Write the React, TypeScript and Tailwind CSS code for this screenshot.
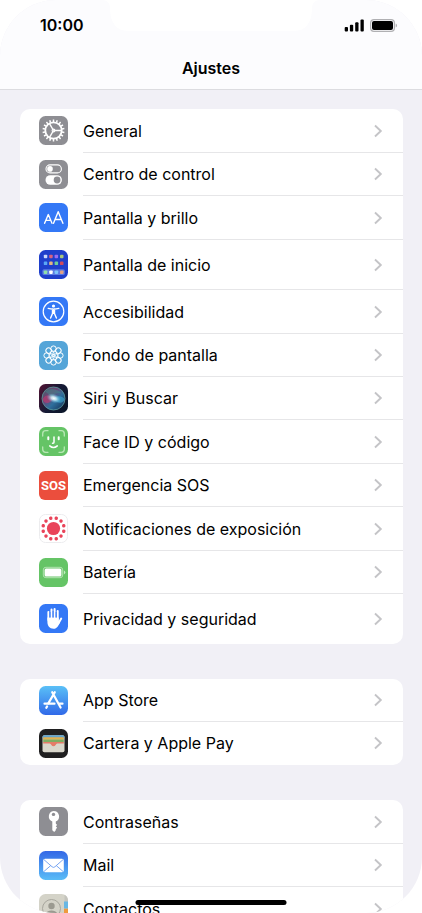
import type { ReactNode } from "react";

type Row = { label: string; icon: ReactNode; height: string };

const SHORT = "h-[43px]";
const REGULAR = "h-11";
const TALL = "h-[50px]";

function Tile({ fill, children }: { fill: string; children?: ReactNode }) {
  return (
    <svg viewBox="0 0 29 29" className="size-[29px] shrink-0" fill="none" aria-hidden="true">
      <rect width="29" height="29" rx="6.5" fill={fill} />
      {children}
    </svg>
  );
}

const around = (count: number) => Array.from({ length: count }, (_, i) => (i * 360) / count);

function GearIcon() {
  return (
    <Tile fill="#8e8e93">
      <g stroke="#fff">
        <circle cx="14.5" cy="14.5" r="8.2" strokeWidth="1.8" />
        {around(18).map((a) => (
          <path key={a} d="M14.5 5.9V3.5" strokeWidth="1.5" transform={`rotate(${a} 14.5 14.5)`} />
        ))}
        {[90, 210, 330].map((a) => (
          <path key={a} d="M14.5 14.5V6.5" strokeWidth="1.4" transform={`rotate(${a} 14.5 14.5)`} />
        ))}
        <circle cx="14.5" cy="14.5" r="1.4" strokeWidth="1.1" />
      </g>
    </Tile>
  );
}

function ControlsIcon() {
  return (
    <Tile fill="#8e8e93">
      <rect x="7" y="4.9" width="15.4" height="8" rx="4" stroke="#fff" strokeWidth="1.1" />
      <circle cx="11" cy="8.9" r="2.8" fill="#fff" />
      <rect x="6.5" y="15.2" width="16.4" height="9.6" rx="4.8" fill="#fff" />
      <circle cx="18.1" cy="20" r="3.4" fill="#8e8e93" />
    </Tile>
  );
}

function DisplayIcon() {
  return (
    <Tile fill="#3478f6">
      <g stroke="#fff" strokeWidth="1.4" strokeLinecap="round" strokeLinejoin="round">
        <path d="M5.6 20.3 9.3 11.6 13 20.3M6.8 17.4h5" />
        <path d="M14.5 20.3 19.2 8.7 23.9 20.3M16 16.5h6.4" />
      </g>
    </Tile>
  );
}

const appDots = [
  ["#c9d8fb", "#d9627f", "#9b6cf0", "#a8c77c"],
  ["#5aa6f7", "#e3b482", "#6fcf9a", "#d1495b"],
  ["#8fe0a8", "#ffffff", "#7cc4fb", "#e2a183"],
];

function HomeScreenIcon() {
  return (
    <Tile fill="#1f3fcb">
      <rect x="3.4" y="19.2" width="22.4" height="5.8" rx="1.6" fill="#5b7be4" />
      {appDots.map((line, r) =>
        line.map((c, i) => (
          <rect key={`${r}${i}`} x={4.8 + i * 5.4} y={[4.7, 11.6, 20.4][r]} width="3.5" height="3.5" rx="0.9" fill={c} />
        )),
      )}
    </Tile>
  );
}

function AccessibilityIcon() {
  return (
    <Tile fill="#3478f6">
      <circle cx="14.5" cy="14.5" r="10.3" stroke="#fff" strokeWidth="1.2" />
      <circle cx="14.5" cy="9" r="1.6" fill="#fff" />
      <path
        d="M9.2 11.4c3.4 1 7.2 1 10.6 0M14.5 12.2v4M13.5 12v4.4l-1.9 4.7M15.5 12v4.4l1.9 4.7"
        stroke="#fff"
        strokeWidth="1.4"
        strokeLinecap="round"
        strokeLinejoin="round"
      />
    </Tile>
  );
}

function WallpaperIcon() {
  return (
    <Tile fill="#55a5d8">
      <g stroke="#fff">
        {around(8).map((a) => (
          <circle key={a} cx="14.5" cy="7.6" r="2.7" strokeWidth="1" transform={`rotate(${a} 14.5 14.5)`} />
        ))}
        {around(6).map((a) => (
          <circle key={a} cx="14.5" cy="11.9" r="1.9" strokeWidth="0.8" transform={`rotate(${a + 30} 14.5 14.5)`} />
        ))}
      </g>
    </Tile>
  );
}

function SiriIcon() {
  return (
    <Tile fill="url(#siriBase)">
      <defs>
        <linearGradient id="siriBase" x1="0" y1="0.2" x2="1" y2="0.8">
          <stop offset="0" stopColor="#4a1433" />
          <stop offset="0.5" stopColor="#151a35" />
          <stop offset="1" stopColor="#0b1729" />
        </linearGradient>
        <linearGradient id="siriOrb" x1="0" y1="0" x2="1" y2="1">
          <stop offset="0" stopColor="#3d5f66" />
          <stop offset="0.35" stopColor="#6d4576" />
          <stop offset="0.6" stopColor="#2f6f9d" />
          <stop offset="1" stopColor="#122c50" />
        </linearGradient>
        <radialGradient id="siriGlow">
          <stop offset="0" stopColor="#fff" />
          <stop offset="0.35" stopColor="#d3f0fa" stopOpacity="0.85" />
          <stop offset="1" stopColor="#5fb6dc" stopOpacity="0" />
        </radialGradient>
      </defs>
      <circle cx="14.5" cy="14.5" r="11.5" fill="url(#siriOrb)" stroke="#5d9a9c" strokeWidth="0.8" />
      <path d="M3.6 15c3-5 7-4 10.9-.4C11 20 5.500 21 3.600 15z" fill="#c5376e" opacity="0.6" />
      <path d="M6 7.5c5-4 12-3 17 2-6-1-10 1-9 5-3-3-5-5-8-7z" fill="#3e8c8c" opacity="0.5" />
      <path d="M14 15c4-4 9-3 11.5 0-1 5-7 5-11.5 0z" fill="#42b5dc" opacity="0.55" />
      <ellipse cx="14.8" cy="14.3" rx="7.5" ry="4.6" fill="url(#siriGlow)" transform="rotate(20 14.8 14.3)" />
    </Tile>
  );
}

function FaceIdIcon() {
  return (
    <Tile fill="#65c466">
      <path
        d="M3.700 9V6.700a3 3 0 0 1 3-3H9M20 3.700h2.300a3 3 0 0 1 3 3V9M25.300 20v2.300a3 3 0 0 1-3 3H20M9 25.300H6.700a3 3 0 0 1-3-3V20"
        stroke="#b9e7b6"
        strokeWidth="1.3"
        strokeLinecap="round"
      />
      <g stroke="#fff" strokeLinecap="round" strokeLinejoin="round">
        <path d="M9.3 10.3v2M19.7 10.3v2" strokeWidth="2" />
        <path d="M15 10v5.200q0 1-1 1h-.5M10.700 18.900q3.800 3.300 7.600 0" strokeWidth="1.5" />
      </g>
    </Tile>
  );
}

function SosIcon() {
  return (
    <span className="flex size-[29px] shrink-0 items-center justify-center rounded-md bg-[#eb4e3d] font-['Roboto',sans-serif] text-[13px] leading-none font-bold text-white">
      SOS
    </span>
  );
}

function ExposureIcon() {
  return (
    <svg viewBox="0 0 29 29" className="size-[29px] shrink-0" aria-hidden="true">
      <rect x="0.5" y="0.5" width="28" height="28" rx="6" fill="#fff" stroke="#ececee" />
      <circle cx="14.5" cy="14.5" r="6.6" fill="#e9445a" />
      {around(12).map((a) => (
        <circle key={a} cx="14.5" cy="3.9" r="1.75" fill="#e9445a" transform={`rotate(${a + 15} 14.5 14.5)`} />
      ))}
    </svg>
  );
}

function BatteryIcon() {
  return (
    <Tile fill="#65c466">
      <rect x="4.3" y="9.3" width="19.4" height="10.4" rx="2.6" stroke="#c5ebc4" strokeWidth="0.8" />
      <rect x="5.6" y="10.6" width="16.8" height="7.8" rx="1.5" fill="#fff" />
      <path d="M24.900 12.600v3.800q1.500-.6 1.500-1.900t-1.500-1.900z" fill="#c5ebc4" />
    </Tile>
  );
}

function HandIcon() {
  return (
    <Tile fill="#3478f6">
      <g stroke="#fff" strokeLinecap="round" strokeWidth="2">
        <path d="M9.4 8v8M12.5 5.6V15M15.6 5.1V15M18.7 7v9" />
        <path d="M22.2 14.600 19.400 19.600" />
      </g>
      <path d="M8.400 13.500h11.300v3l1.300 1.500c-1.500 3.500-2.800 6.800-6.500 6.800-4 0-6.100-2.900-6.100-7z" fill="#fff" />
      <path d="M10.950 8v5.500M14.050 7v6.500M17.150 8v5.500" stroke="#3478f6" strokeWidth="0.9" />
    </Tile>
  );
}

function AppStoreIcon() {
  return (
    <Tile fill="url(#storeBlue)">
      <defs>
        <linearGradient id="storeBlue" x1="0" y1="0" x2="0" y2="1">
          <stop offset="0" stopColor="#5ac0f7" />
          <stop offset="1" stopColor="#3169e8" />
        </linearGradient>
      </defs>
      <g stroke="#fff" strokeWidth="2.2" strokeLinecap="round">
        <path d="M13.200 6.200 21.600 21.500M15.800 6.200 9.300 17.400M8.100 20.400l-.8 1.400" />
        <path d="M5.500 17.700h10M20.500 17.700h3" />
      </g>
    </Tile>
  );
}

function WalletIcon() {
  return (
    <Tile fill="#1f1f20">
      <rect x="3.5" y="6.2" width="22" height="17" rx="1.8" fill="#d9d7cc" />
      <path d="M3.500 9.500V8a1.800 1.800 0 0 1 1.800-1.800h18.400A1.800 1.800 0 0 1 25.500 8v1.500z" fill="#63a5cd" />
      <path d="M4.200 8.200h20.600v2.600H4.200z" fill="#e3b04f" />
      <path d="M4.200 10.600h20.600v2.600H4.200z" fill="#7ead62" />
      <path d="M4.200 12.900h20.600v1.500h-6.600c-1.200 0-1.800 2.900-3.700 2.900s-2.500-2.900-3.700-2.900H4.200z" fill="#e47c68" />
    </Tile>
  );
}

function KeyIcon() {
  return (
    <Tile fill="#8e8e93">
      <path
        d="M14.500 3.900a5.600 5.600 0 0 1 2.300 10.700v2l1.300 1.300-1.300 1.400 1.300 1.500-1.300 1.500v.9l-1.600 1.900-1.900-1.900v-8.600A5.600 5.600 0 0 1 14.500 3.900z"
        fill="#fff"
      />
      <circle cx="14.5" cy="7.4" r="1.7" fill="#8e8e93" />
    </Tile>
  );
}

function MailIcon() {
  return (
    <Tile fill="url(#mailBlue)">
      <defs>
        <linearGradient id="mailBlue" x1="0" y1="0" x2="0" y2="1">
          <stop offset="0" stopColor="#3468e6" />
          <stop offset="1" stopColor="#5abcf7" />
        </linearGradient>
      </defs>
      <rect x="4.2" y="7.7" width="20.6" height="13.6" rx="1.8" fill="#fff" />
      <path d="m4.800 8.500 8.300 7.300q1.400 1.200 2.800 0l8.300-7.300M4.800 20.600l6.900-6M24.200 20.600l-6.900-6" stroke="#6a9cf0" strokeWidth="0.9" />
    </Tile>
  );
}

function ContactsIcon() {
  return (
    <Tile fill="#d4d3c8">
      <path d="M25.500 0.700v27.600A6.500 6.500 0 0 0 29 22.500v-16A6.500 6.500 0 0 0 25.500 0.700z" fill="#c4c4bd" />
      <path d="M25 7.500h4v7h-4z" fill="#68b7e4" />
      <path d="M25 14.800h4V23l-4 4z" fill="#ef9a3e" />
      <circle cx="12.5" cy="14.5" r="9" stroke="#a3a298" strokeWidth="0.9" />
      <circle cx="12.5" cy="12" r="3.2" fill="#9b9a90" />
      <path d="M6.300 20.700q1-4.300 6.200-4.300t6.200 4.300q-6.200 5-12.400 0z" fill="#9b9a90" />
    </Tile>
  );
}

const groups: Row[][] = [
  [
    { label: "General", icon: <GearIcon />, height: REGULAR },
    { label: "Centro de control", icon: <ControlsIcon />, height: SHORT },
    { label: "Pantalla y brillo", icon: <DisplayIcon />, height: REGULAR },
    { label: "Pantalla de inicio", icon: <HomeScreenIcon />, height: TALL },
    { label: "Accesibilidad", icon: <AccessibilityIcon />, height: REGULAR },
    { label: "Fondo de pantalla", icon: <WallpaperIcon />, height: SHORT },
    { label: "Siri y Buscar", icon: <SiriIcon />, height: SHORT },
    { label: "Face ID y código", icon: <FaceIdIcon />, height: REGULAR },
    { label: "Emergencia SOS", icon: <SosIcon />, height: SHORT },
    { label: "Notificaciones de exposición", icon: <ExposureIcon />, height: REGULAR },
    { label: "Batería", icon: <BatteryIcon />, height: SHORT },
    { label: "Privacidad y seguridad", icon: <HandIcon />, height: TALL },
  ],
  [
    { label: "App Store", icon: <AppStoreIcon />, height: SHORT },
    { label: "Cartera y Apple Pay", icon: <WalletIcon />, height: SHORT },
  ],
  [
    { label: "Contraseñas", icon: <KeyIcon />, height: REGULAR },
    { label: "Mail", icon: <MailIcon />, height: SHORT },
    { label: "Contactos", icon: <ContactsIcon />, height: REGULAR },
  ],
];

function SettingsGroup({ rows }: { rows: Row[] }) {
  return (
    <ul className="overflow-hidden rounded-[10px] bg-white">
      {rows.map((row, i) => (
        <li key={row.label} className={row.height}>
          <a href="#" className="flex h-full gap-[15px] pl-[19px]">
            <span className="flex items-center border-b border-transparent">{row.icon}</span>
            <span
              className={`flex flex-1 items-center justify-between border-b pr-5 ${
                i < rows.length - 1 ? "border-[#e6e6e8]" : "border-transparent"
              }`}
            >
              {row.label}
              <svg viewBox="0 0 9 14" className="h-3.5 w-[9px]" fill="none" aria-hidden="true">
                <path d="m1 1.500 5.800 5.500L1 12.500" stroke="#c4c4c7" strokeWidth="1.9" />
              </svg>
            </span>
          </a>
        </li>
      ))}
    </ul>
  );
}

function StatusBar() {
  return (
    <div className="flex h-12 items-center justify-between pt-0.5 pr-6 pl-10">
      <time className="font-semibold">10:00</time>
      <div className="flex items-center gap-1.5">
        <svg viewBox="0 0 20 13" className="h-[13px] w-5" aria-label="Cobertura">
          <rect x="0.7" y="8" width="3.3" height="4.5" rx="1" />
          <rect x="5.900" y="5.8" width="3.3" height="6.7" rx="1" />
          <rect x="11.200" y="3.2" width="3.3" height="9.3" rx="1" />
          <rect x="16.500" y="0.5" width="3.3" height="12" rx="1" />
        </svg>
        <svg viewBox="0 0 28 13" className="h-[13px] w-7" aria-label="Batería cargada">
          <rect x="0.6" y="0.6" width="23.8" height="11.8" rx="3.4" fill="none" stroke="#b0b0b3" strokeWidth="1.2" />
          <rect x="2" y="2" width="21" height="9" rx="2" />
          <path d="M25.700 4.500v4q1.300-.6 1.300-2t-1.300-2z" fill="#b0b0b3" />
        </svg>
      </div>
    </div>
  );
}

export default function App() {
  return (
    <div className="h-screen bg-white font-['Inter',sans-serif] text-base text-black">
      <div className="relative h-full overflow-hidden rounded-[56px] bg-[#f1f0f6]">
        <header className="border-b border-[#dcdce0] bg-[#fcfcfe]">
          <StatusBar />
          <h1 className="flex h-[41px] items-center justify-center pb-0.5 font-semibold">Ajustes</h1>
        </header>
        <svg viewBox="0 0 220 31" className="absolute top-0 left-1/2 h-[31px] w-[220px] -translate-x-1/2" aria-hidden="true">
          <path d="M1 0c5 0 8 3 8 8 0 14 6 23 18 23h166c12 0 18-9 18-23 0-5 3-8 8-8z" fill="#fff" />
        </svg>
        <main className="flex flex-col gap-[35px] pt-[19px] pr-[19px] pl-5">
          {groups.map((rows) => (
            <SettingsGroup key={rows[0].label} rows={rows} />
          ))}
        </main>
        <div className="absolute bottom-2 left-1/2 h-[5px] w-[151px] -translate-x-1/2 rounded-full bg-black" />
      </div>
    </div>
  );
}
